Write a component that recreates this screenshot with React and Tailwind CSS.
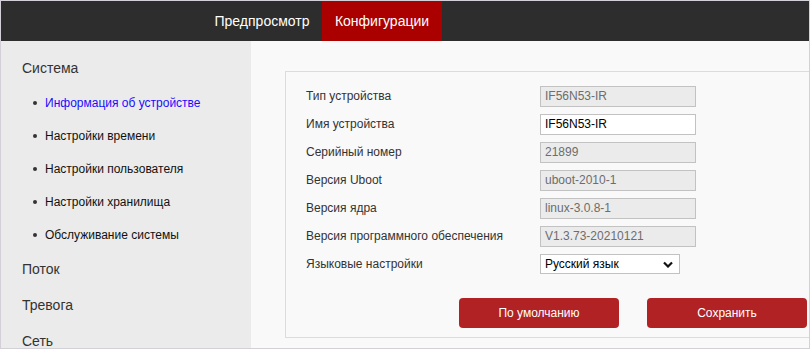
import React from 'react';

const menu = [
  { title: 'Система', items: ['Информация об устройстве', 'Настройки времени', 'Настройки пользователя', 'Настройки хранилища', 'Обслуживание системы'] },
  { title: 'Поток', items: [] },
  { title: 'Тревога', items: [] },
  { title: 'Сеть', items: [] },
];

const fields = [
  { label: 'Тип устройства', value: 'IF56N53-IR', disabled: true },
  { label: 'Имя устройства', value: 'IF56N53-IR' },
  { label: 'Серийный номер', value: '21899', disabled: true },
  { label: 'Версия Uboot', value: 'uboot-2010-1', disabled: true },
  { label: 'Версия ядра', value: 'linux-3.0.8-1', disabled: true },
  { label: 'Версия программного обеспечения', value: 'V1.3.73-20210121', disabled: true },
];

const Sidebar = () => (
  <aside className="w-[250px] shrink-0 bg-[#ebebeb] pt-[9px]">
    {menu.map((group) => (
      <div key={group.title}>
        <div className="flex h-[36px] items-center pl-[21px] text-[14px] text-[#333]">{group.title}</div>
        {group.items.map((item, i) => (
          <div key={item} className="flex h-[33px] items-center pl-[32px] text-[12px]">
            <span className="mr-[8px] h-[4px] w-[4px] rounded-full bg-[#333]"></span>
            <span className={i === 0 ? 'text-[#1a0dff]' : 'text-[#111]'}>{item}</span>
          </div>
        ))}
      </div>
    ))}
  </aside>
);

const Field = ({ label, value, disabled }) => (
  <div className="flex h-[28px] items-center">
    <div className="w-[234px] text-[12px] text-[#333]">{label}</div>
    <div
      className={`flex h-[21px] w-[156px] items-center border border-[#c2c2c2] px-[4px] text-[12px] ${disabled ? 'bg-[#ebebeb] text-[#6d6d6d]' : 'bg-white text-black'}`}
    >
      {value}
    </div>
  </div>
);

export default function App() {
  return (
    <div
      className="flex h-[349px] w-[810px] flex-col overflow-hidden border border-[#d4d0d8] bg-[#f9f9f9]"
      style={{ fontFamily: '"Liberation Sans", Arial, sans-serif' }}
    >
      <header className="flex h-[40px] shrink-0 bg-[#2d2d2d] pl-[201px] text-[14px] text-white">
        <div className="flex w-[120px] items-center justify-center">Предпросмотр</div>
        <div className="flex w-[120px] items-center justify-center bg-[#aa0000]">Конфигурации</div>
      </header>

      <div className="flex min-h-0 flex-1">
        <Sidebar />
        <main className="min-w-0 flex-1 overflow-hidden pl-[34px] pt-[30px]">
          <section className="w-[560px] border-b border-l border-t border-[#dcdcdc] pb-[9px] pl-[20px] pt-[10px]">
            {fields.map((f) => (
              <Field key={f.label} {...f} />
            ))}
            <div className="flex h-[28px] items-center">
              <div className="w-[234px] text-[12px] text-[#333]">Языковые настройки</div>
              <div className="flex h-[20px] w-[140px] items-center justify-between border border-[#c2c2c2] bg-white pl-[4px] pr-[6px] text-[12px] text-black">
                <span>Русский язык</span>
                <svg width="10" height="7" viewBox="0 0 10 7" fill="none">
                  <path d="M1 1.5 L5 5.5 L9 1.5" stroke="#111" strokeWidth="2.2" />
                </svg>
              </div>
            </div>
            <div className="mt-[20px] flex gap-[28px] pl-[153px]">
              <button className="h-[30px] w-[160px] rounded-[4px] bg-[#b02224] text-[12px] text-white">По умолчанию</button>
              <button className="h-[30px] w-[160px] rounded-[4px] bg-[#b02224] text-[12px] text-white">Сохранить</button>
            </div>
          </section>
        </main>
      </div>
    </div>
  );
}
